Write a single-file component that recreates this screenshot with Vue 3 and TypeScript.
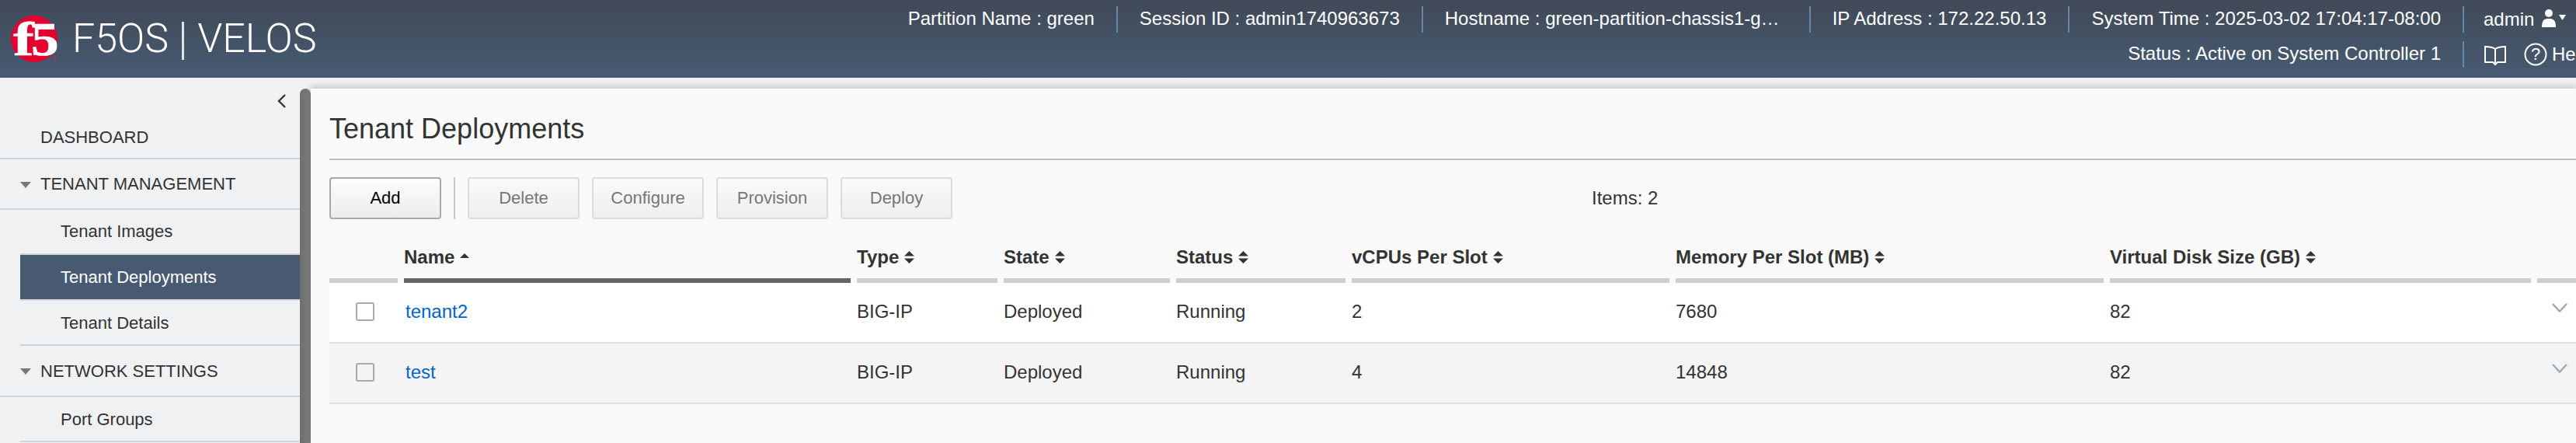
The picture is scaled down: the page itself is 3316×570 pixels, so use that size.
<script setup lang="ts">
interface Col { label: string; sort: 'asc' | 'both' }
const cols: Col[] = [
  { label: 'Name', sort: 'asc' },
  { label: 'Type', sort: 'both' },
  { label: 'State', sort: 'both' },
  { label: 'Status', sort: 'both' },
  { label: 'vCPUs Per Slot', sort: 'both' },
  { label: 'Memory Per Slot (MB)', sort: 'both' },
  { label: 'Virtual Disk Size (GB)', sort: 'both' },
]
const rows = [
  ['tenant2', 'BIG-IP', 'Deployed', 'Running', '2', '7680', '82'],
  ['test', 'BIG-IP', 'Deployed', 'Running', '4', '14848', '82'],
]
const actions = ['Delete', 'Configure', 'Provision', 'Deploy']
</script>

<template>
  <div class="app">
    <header class="top">
      <div class="brand">
        <svg class="logo" width="64" height="64" viewBox="0 0 64 64">
          <circle cx="30" cy="32" r="30" fill="#e4032e" />
          <text transform="translate(3 53) scale(1.3 1)" class="logo-f">f</text>
          <text transform="translate(26 53) scale(1.15 1)" class="logo-5">5</text>
          <text x="53" y="60" class="logo-r">®</text>
        </svg>
        <span class="product">F5OS</span>
        <span class="bar"></span>
        <span class="product">VELOS</span>
      </div>
      <div class="meta">
        <div class="meta-row">
          <span class="meta-item">Partition Name : green</span>
          <span class="meta-item">Session ID : admin1740963673</span>
          <span class="meta-item host">Hostname : green-partition-chassis1-g…</span>
          <span class="meta-item">IP Address : 172.22.50.13</span>
          <span class="meta-item">System Time : 2025-03-02 17:04:17-08:00</span>
          <span class="meta-item user">
            admin
            <svg width="32" height="26" viewBox="0 0 32 26" class="user-icon">
              <circle cx="9" cy="6" r="5" fill="#fff" />
              <path d="M0 24 C0 15 3 13 9 13 C15 13 18 15 18 24 Z" fill="#fff" />
              <path d="M22 8 H31 L26.500 15 Z" fill="#fff" />
            </svg>
          </span>
        </div>
        <div class="meta-row second">
          <span class="meta-item">Status : Active on System Controller 1</span>
          <span class="meta-item tools">
            <svg class="book" width="28" height="26" viewBox="0 0 28 26" fill="none" stroke="#fff" stroke-width="2">
              <path d="M14 4 C11 2 6 1 1 1 V21 H11 L14 24 L17 21 H27 V1 C22 1 17 2 14 4 Z M14 4 V22" />
            </svg>
            <svg class="help" width="30" height="30" viewBox="0 0 30 30" fill="none" stroke="#fff" stroke-width="2">
              <circle cx="15" cy="15" r="13.500" />
              <text x="15" y="22" class="q">?</text>
            </svg>
            <span class="help-text">Help</span>
          </span>
        </div>
      </div>
    </header>

    <div class="body">
      <aside class="side">
        <div class="collapse">
          <svg width="12" height="18" viewBox="0 0 12 18" fill="none" stroke="#333" stroke-width="2.400">
            <path d="M10 1 L2 9 L10 17" />
          </svg>
        </div>
        <div class="group dash">DASHBOARD</div>
        <div class="group"><i class="tri"></i>TENANT MANAGEMENT</div>
        <div class="sub first">Tenant Images</div>
        <div class="sub active">Tenant Deployments</div>
        <div class="sub details">Tenant Details</div>
        <div class="group net"><i class="tri"></i>NETWORK SETTINGS</div>
        <div class="sub port">Port Groups</div>
      </aside>
      <div class="scroll"></div>
      <main class="main">
        <h1 class="title">Tenant Deployments</h1>
        <div class="toolbar">
          <button class="btn primary">Add</button>
          <span class="tool-sep"></span>
          <button v-for="a in actions" :key="a" class="btn">{{ a }}</button>
          <span class="items">Items: 2</span>
        </div>
        <div class="grid head">
          <div class="th"></div>
          <div v-for="(c, i) in cols" :key="c.label" class="th" :class="{ sorted: i === 0 }">
            <span class="th-label">{{ c.label }}
              <svg v-if="c.sort === 'asc'" class="sort asc" width="12" height="6" viewBox="0 0 12 6"><path d="M6 0 L12 6 H0 Z" fill="#333" /></svg>
              <svg v-else class="sort" width="13" height="16" viewBox="0 0 13 16"><path d="M6.500 0 L13 6.500 H0 Z M6.500 16 L13 9.500 H0 Z" fill="#333" /></svg>
            </span>
          </div>
          <div class="th"></div>
        </div>
        <div v-for="r in rows" :key="r[0]" class="grid row">
          <div class="td"><span class="check"></span></div>
          <div v-for="(v, i) in r" :key="i" class="td" :class="{ link: i === 0 }">{{ v }}</div>
          <div class="td expand">
            <svg width="20" height="12" viewBox="0 0 20 12" fill="none" stroke="#9ba8bc" stroke-width="2.400">
              <path d="M1 1 L10 10.500 L19 1" />
            </svg>
          </div>
        </div>
      </main>
    </div>
  </div>
</template>

<style>
html, body { margin: 0; overflow: hidden; }
</style>

<style scoped>
.app {
  width: 3316px;
  height: 570px;
  overflow: hidden;
  display: flex;
  flex-direction: column;
  font-family: "Liberation Sans", Arial, sans-serif;
  font-size: 22px;
  color: #333;
  background: #f0f1f3;
}
.top {
  height: 100px;
  flex: none;
  display: flex;
  justify-content: space-between;
  background: linear-gradient(180deg, #404957 0%, #475b73 100%);
  color: #fff;
}
.brand {
  display: flex;
  align-items: center;
  padding-left: 14px;
  height: 100px;
}
.logo { margin-right: 15px; overflow: visible; }
.logo-f { font: bold 62px "Liberation Serif", serif; fill: #fff; stroke: #fff; stroke-width: 0.6px; }
.logo-5 { font: bold 62px "Liberation Serif", serif; fill: #fff; stroke: #fff; stroke-width: 0.6px; }
.logo-r { font: 8px "Liberation Sans", sans-serif; fill: #c9203f; }
.product {
  font-family: Roboto, sans-serif;
  font-weight: 300;
  font-size: 52px;
  line-height: 100px;
}
.bar {
  width: 3px;
  height: 49px;
  background: #dfe3e8;
  margin: 4px 17px 0 17px;
}
.meta {
  width: 2000px;
  flex: none;
  margin-left: auto;
  padding-top: 8px;
  display: flex;
  flex-direction: column;
  gap: 11px;
}
.meta-row {
  display: flex;
  justify-content: flex-end;
  height: 34px;
}
.meta-item {
  font-size: 24px;
  line-height: 32px;
  height: 34px;
  padding: 0 28px;
  white-space: nowrap;
  border-right: 2px solid #6488ad;
}
.meta-item.host { padding-right: 38px; }
.meta-row .meta-item:last-child { border-right: 0; }
.user { width: 144px; box-sizing: border-box; padding: 0 0 0 25px; flex: none; display: flex; align-items: center; gap: 10px; }
.user-icon { margin-top: -2px; flex: none; }
.tools { width: 144px; box-sizing: border-box; padding: 0 0 0 26px; flex: none; display: flex; align-items: center; overflow: hidden; }
.book { flex: none; margin-top: 4px; }
.help { margin-left: 23px; flex: none; }
.q { font: 22px "Liberation Sans", sans-serif; fill: #fff; stroke: none; text-anchor: middle; }
.help-text { margin-left: 6px; flex: none; }

.body { flex: 1; display: flex; min-height: 0; }
.side { width: 386px; flex: none; background: #f0f1f3; }
.collapse { height: 48px; display: flex; justify-content: flex-end; align-items: flex-end; padding: 0 17px 0 0; box-sizing: border-box; }
.collapse svg { margin-bottom: 9px; }
.group {
  height: 65px;
  box-sizing: border-box;
  padding-left: 52px;
  line-height: 63px;
  border-bottom: 2px solid #cdd4db;
  position: relative;
}
.group.dash { height: 57px; line-height: 57px; }
.group.net { height: 66px; line-height: 66px; }
.tri {
  position: absolute;
  left: 26px;
  top: 29px;
  width: 0;
  height: 0;
  border-left: 7px solid transparent;
  border-right: 7px solid transparent;
  border-top: 8px solid #77777d;
}
.sub {
  margin-left: 26px;
  padding-left: 52px;
  box-sizing: border-box;
  height: 58px;
  line-height: 58px;
  border-bottom: 2px solid #cdd4db;
}
.sub.first { line-height: 56px; }
.sub.active { background: #475a72; color: #fff; height: 57px; line-height: 58px; border-bottom: 0; box-shadow: 0 2px 0 #d7dce2; }
.sub.details { margin-top: 2px; }

.scroll {
  width: 14px;
  flex: none;
  margin-top: 14px;
  border-radius: 7px 7px 0 0;
  background: linear-gradient(90deg, #6e6e6e, #808080);
}
.main {
  flex: 1;
  min-width: 0;
  margin-top: 14px;
  padding-left: 24px;
  background: #fafafa;
  box-shadow: 0 -3px 8px rgba(0, 0, 0, 0.18);
}
.title {
  margin: 0;
  height: 92px;
  padding-top: 26px;
  box-sizing: border-box;
  border-bottom: 2px solid #bdbdbd;
  font-weight: 400;
  font-size: 36px;
  line-height: 52px;
  color: #333;
}
.toolbar {
  margin-top: 22px;
  height: 54px;
  display: flex;
  align-items: stretch;
  gap: 16px;
  position: relative;
}
.btn {
  width: 144px;
  height: 54px;
  box-sizing: border-box;
  border: 2px solid #dcdcdc;
  border-radius: 4px;
  background: linear-gradient(180deg, #fafafa, #eeeeee);
  font: 22px "Liberation Sans", Arial, sans-serif;
  color: #777;
  padding: 0;
}
.btn.primary {
  border-color: #a9a9a9;
  background: linear-gradient(180deg, #fdfdfd, #ececec);
  color: #000;
}
.tool-sep { width: 2px; background: #c8c8c8; }
.items { position: absolute; left: 1625px; top: 0; line-height: 54px; font-size: 24px; }
.grid {
  display: grid;
  grid-template-columns: 88px 575px 181px 214px 218px 409px 551px 542px 80px;
  column-gap: 8px;
  width: 3000px;
  font-size: 24px;
}
.head { margin-top: 27px; height: 55px; }
.th {
  box-sizing: border-box;
  border-bottom: 6px solid #cfcfcf;
  font-weight: 700;
  line-height: 44px;
  white-space: nowrap;
  height: 55px;
}
.th.sorted { border-bottom-color: #666; }
.th-label { display: inline-flex; align-items: center; gap: 7px; }
.sort.asc { margin-top: -4px; }
.row { background: #fff; height: 78px; border-bottom: 2px solid #dedede; box-sizing: border-box; }
.row + .row { background: #f4f4f4; }
.td { line-height: 74px; white-space: nowrap; position: relative; }
.td.link { color: #0066cc; padding-left: 2px; }
.check {
  position: absolute;
  left: 34px;
  top: 25px;
  width: 24px;
  height: 24px;
  box-sizing: border-box;
  border: 2px solid #aaa;
  border-radius: 3px;
}
.expand svg { position: absolute; left: 19px; top: 26px; }
</style>
